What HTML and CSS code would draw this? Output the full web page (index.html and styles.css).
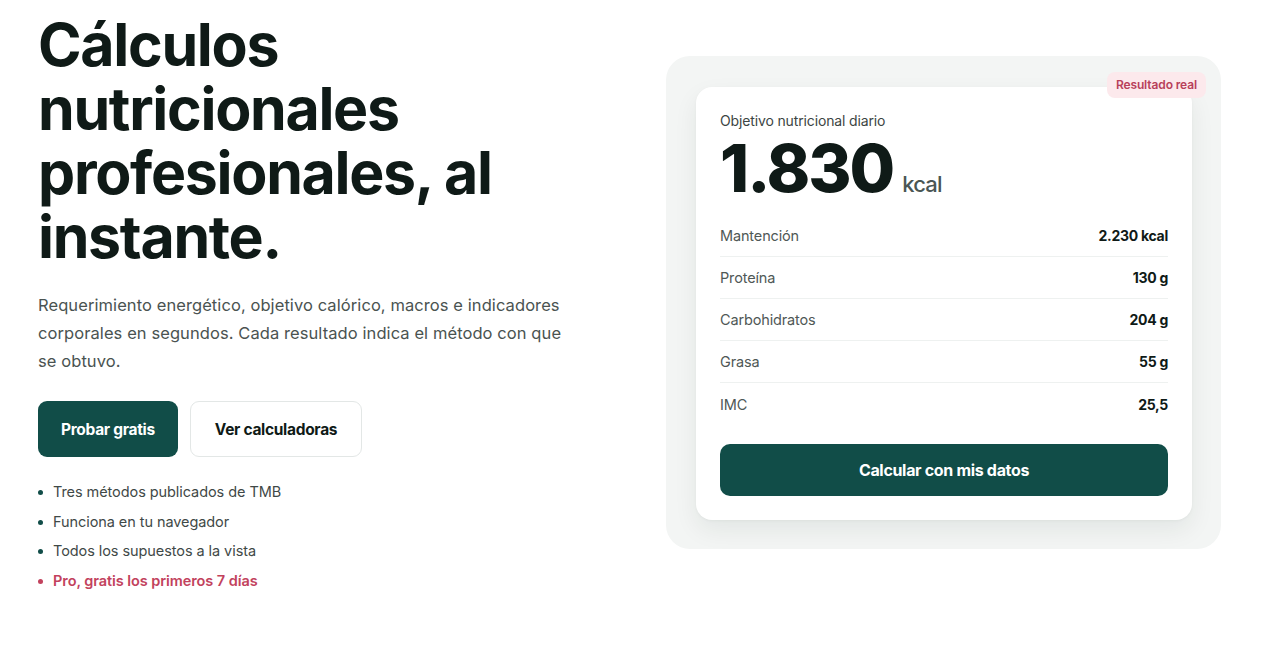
FILE: index.html
```html
<!DOCTYPE html>
<html lang="es">
<head>
<meta charset="utf-8">
<title>Cálculos nutricionales</title>
<link rel="stylesheet" href="styles.css">
</head>
<body>
<main class="hero">
  <section class="intro">
    <h1 class="title">Cálculos nutricionales profesionales, al instante.</h1>
    <p class="lead">Requerimiento energético, objetivo calórico, macros e indicadores corporales en segundos. Cada resultado indica el método con que se obtuvo.</p>
    <div class="actions">
      <a class="btn btn-primary" href="#">Probar gratis</a>
      <a class="btn btn-outline" href="#">Ver calculadoras</a>
    </div>
    <ul class="features">
      <li>Tres métodos publicados de TMB</li>
      <li>Funciona en tu navegador</li>
      <li>Todos los supuestos a la vista</li>
      <li class="pro">Pro, gratis los primeros 7 días</li>
    </ul>
  </section>
  <aside class="panel">
    <span class="badge">Resultado real</span>
    <div class="card">
      <div class="card-label">Objetivo nutricional diario</div>
      <div class="total"><span class="total-num">1.830</span><span class="total-unit">kcal</span></div>
      <dl class="rows">
        <div class="row"><dt>Mantención</dt><dd>2.230 kcal</dd></div>
        <div class="row"><dt>Proteína</dt><dd>130 g</dd></div>
        <div class="row"><dt>Carbohidratos</dt><dd>204 g</dd></div>
        <div class="row"><dt>Grasa</dt><dd>55 g</dd></div>
        <div class="row"><dt>IMC</dt><dd>25,5</dd></div>
      </dl>
      <a class="btn btn-primary btn-block" href="#">Calcular con mis datos</a>
    </div>
  </aside>
</main>
</body>
</html>
```

FILE: styles.css
```css
* { box-sizing: border-box; }
html, body { margin: 0; padding: 0; background: #ffffff; }
body {
  font-family: "Inter", "Liberation Sans", sans-serif;
  color: #0f1a17;
}
.hero {
  display: grid;
  grid-template-columns: 560px 555px;
  column-gap: 68px;
  padding: 13px 52px 0 38px;
  align-items: start;
}
.title {
  margin: 0;
  font-size: 59px;
  line-height: 64px;
  font-weight: 700;
  letter-spacing: -0.022em;
  color: #0f1a17;
  max-width: 500px;
}
.lead {
  margin: 22px 0 0;
  font-size: 16.5px;
  line-height: 28px;
  color: #4a5351;
  letter-spacing: 0.005em;
  max-width: 524px;
}
.actions {
  display: flex;
  gap: 12px;
  margin-top: 26px;
}
.btn {
  display: inline-flex;
  align-items: center;
  justify-content: center;
  height: 56px;
  padding: 0 23px;
  border-radius: 9px;
  font-size: 15.5px;
  font-weight: 700;
  text-decoration: none;
  letter-spacing: -0.02em;
}
.btn-primary {
  background: #114d48;
  color: #ffffff;
}
.btn-outline {
  background: #ffffff;
  color: #0f1a17;
  border: 1px solid #e3e7e6;
  padding: 0 24px;
}
.features {
  list-style: none;
  margin: 20px 0 0;
  padding: 0;
}
.features li {
  position: relative;
  padding-left: 15px;
  font-size: 14.5px;
  line-height: 29.7px;
  color: #3f4947;
  letter-spacing: -0.005em;
}
.features li::before {
  content: "";
  position: absolute;
  left: 0;
  top: 13px;
  width: 5px;
  height: 5px;
  border-radius: 50%;
  background: #114d48;
}
.features li.pro {
  color: #c2425d;
  font-weight: 600;
}
.features li.pro::before { background: #c2425d; }

.panel {
  position: relative;
  margin-top: 43px;
  background: #f3f5f4;
  border-radius: 24px;
  padding: 31px 29px 29px 30px;
}
.badge {
  position: absolute;
  top: 16px;
  right: 15px;
  background: #fce9ec;
  color: #b8405a;
  font-size: 12px;
  font-weight: 600;
  padding: 6px 9px;
  border-radius: 8px;
  line-height: 14px;
  letter-spacing: -0.01em;
}
.card {
  background: #ffffff;
  border-radius: 16px;
  padding: 24px 24px 24px;
  box-shadow: 0 10px 24px rgba(20, 40, 35, 0.07), 0 1px 3px rgba(20, 40, 35, 0.04);
}
.card-label {
  font-size: 14px;
  line-height: 20px;
  color: #3c4543;
  letter-spacing: -0.01em;
}
.total {
  display: flex;
  align-items: baseline;
  gap: 9px;
  margin-top: 2px;
  height: 70px;
}
.total-num {
  font-size: 66px;
  line-height: 70px;
  font-weight: 800;
  letter-spacing: -0.03em;
  color: #0f1a17;
}
.total-unit {
  font-size: 22px;
  font-weight: 500;
  color: #4a5654;
  letter-spacing: -0.04em;
}
.rows {
  margin: 12px 0 0;
}
.row {
  display: flex;
  justify-content: space-between;
  align-items: center;
  height: 42px;
  border-bottom: 1px solid #eef1f0;
}
.row:last-child { border-bottom: none; }
.row dt {
  font-size: 14.5px;
  color: #4f5856;
  letter-spacing: -0.01em;
}
.row dd {
  margin: 0;
  font-size: 14px;
  font-weight: 700;
  color: #0f1a17;
  letter-spacing: -0.02em;
}
.btn-block {
  display: flex;
  width: 100%;
  height: 52px;
  margin-top: 19px;
  border-radius: 10px;
  font-size: 16px;
}
```
